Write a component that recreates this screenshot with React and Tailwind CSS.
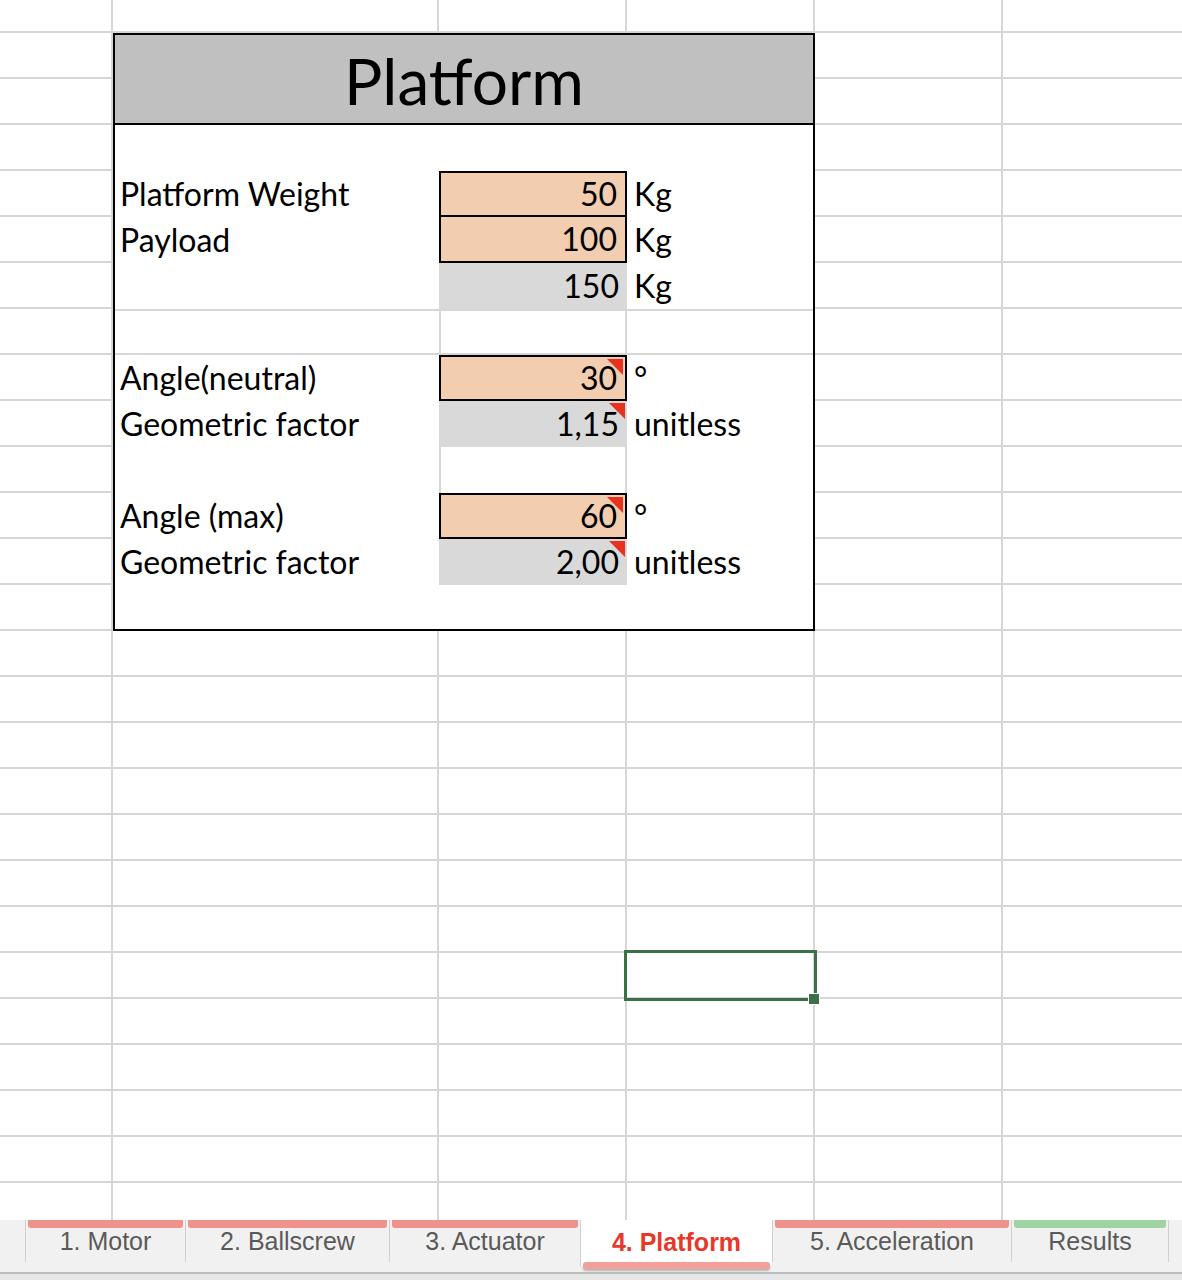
import React from "react";

/**
 * Spreadsheet view: "Platform" sheet with sheet tabs at the bottom
 */
const cellLine = "border-r-2 border-b-2 border-[#d6d6d6]";
const orange = "bg-[#f2cdb0]";
const grey = "bg-[#d9d9d9]";

const Flag = () => (
  <span className="absolute right-[2px] top-[2px] w-0 h-0 border-l-[16px] border-l-transparent border-t-[16px] border-t-[#e8321f]" />
);

const Label = ({ children }) => (
  <div className="flex items-center pl-[5px] leading-none whitespace-nowrap">{children}</div>
);

const Value = ({ children, bg = "", boxed = "", flag = false }) => (
  <div className={`relative flex items-center justify-end pr-[8px] leading-none ${bg} ${boxed}`}>
    {flag && <Flag />}
    {children}
  </div>
);

const Unit = ({ children }) => (
  <div className="flex items-center pl-[7px] leading-none whitespace-nowrap">{children}</div>
);

const Empty = ({ className = "" }) => <div className={className} />;

const PlatformBox = () => (
  <div className="col-start-2 col-span-3 row-start-2 row-span-13 z-10 border-2 border-black bg-white grid grid-cols-[324px_188px_186px] grid-rows-[90px_repeat(10,46px)_44px] text-[32px] text-black">
    <div className="col-span-3 bg-[#c0c0c0] border-b-2 border-black flex justify-center pt-[14px] text-[64px] leading-none">
      Platform
    </div>

    <Empty /><Empty /><Empty />

    <Label>Platform Weight</Label>
    <Value bg={orange} boxed="border-2 border-black">50</Value>
    <Unit>Kg</Unit>

    <Label>Payload</Label>
    <Value bg={orange} boxed="border-x-2 border-b-2 border-black">100</Value>
    <Unit>Kg</Unit>

    <Empty />
    <Value bg={grey}>150</Value>
    <Unit>Kg</Unit>

    <Empty className="border-y-2 border-[#d6d6d6]" />
    <Empty className="border-2 border-[#d6d6d6]" />
    <Empty className="border-y-2 border-[#d6d6d6]" />

    <Label>Angle(neutral)</Label>
    <Value bg={orange} boxed="border-2 border-black" flag>30</Value>
    <Unit>°</Unit>

    <Label>Geometric factor</Label>
    <Value bg={grey} flag>1,15</Value>
    <Unit>unitless</Unit>

    <Empty />
    <Empty className="border-x-2 border-[#d6d6d6]" />
    <Empty />

    <Label>Angle (max)</Label>
    <Value bg={orange} boxed="border-2 border-black" flag>60</Value>
    <Unit>°</Unit>

    <Label>Geometric factor</Label>
    <Value bg={grey} flag>2,00</Value>
    <Unit>unitless</Unit>

    <Empty /><Empty /><Empty />
  </div>
);

const SelectedCell = () => (
  <div className={`relative col-start-4 row-start-22 ${cellLine}`}>
    <div className="absolute -left-[3px] -top-[3px] z-20 w-[193px] h-[51px] border-[3px] border-[#3c7148]" />
    <div className="absolute left-[181px] top-[40px] z-30 w-[12px] h-[12px] bg-[#3c7148] border border-white" />
  </div>
);

const tabs = [
  { label: "1. Motor", width: "w-[160px]", bar: "bg-[#ef928b]" },
  { label: "2. Ballscrew", width: "w-[204px]", bar: "bg-[#ef928b]" },
  { label: "3. Actuator", width: "w-[191px]", bar: "bg-[#ef928b]" },
  { label: "4. Platform", width: "w-[192px]", active: true },
  { label: "5. Acceleration", width: "w-[239px]", bar: "bg-[#ef928b]" },
  { label: "Results", width: "w-[158px]", bar: "bg-[#9fd3a1]", last: true },
];

const SheetTabs = () => (
  <div className="h-[60px] shrink-0 bg-[#f1f1f1] flex flex-col font-['Liberation_Sans',Arial,sans-serif] text-[25px]">
    <div className="h-[52px] shrink-0 flex pl-[25px]">
      {tabs.map((t) =>
        t.active ? (
          <div key={t.label} className={`${t.width} h-[46px] bg-white border-l border-[#d0d0d0] flex flex-col`}>
            <div className="flex-1 flex items-center justify-center pt-[4px] font-bold text-[#e8372b]">{t.label}</div>
            <div className="h-[7px] shrink-0 mx-[2px] rounded-[3px] bg-[#f4a09a] shadow-[0_2px_2px_rgba(0,0,0,0.25)]" />
          </div>
        ) : (
          <div
            key={t.label}
            className={`${t.width} h-[42px] border-l border-[#d0d0d0] ${t.last ? "border-r" : ""} flex flex-col`}
          >
            <div className={`h-[8px] shrink-0 mx-[2px] rounded-b-[3px] ${t.bar}`} />
            <div className="text-center leading-none pt-[1px] text-[#5a5a5a]">{t.label}</div>
          </div>
        )
      )}
    </div>
    <div className="h-[2px] shrink-0 bg-[#bdbdbd]" />
    <div className="flex-1 bg-[#e6e6e6]" />
  </div>
);

export default function App() {
  const fillers = Array.from({ length: 122 });

  return (
    <div className="w-[1182px] h-[1280px] overflow-hidden bg-white flex flex-col font-['Lato','Noto_Sans',sans-serif]">
      <div className="h-[1220px] shrink-0 overflow-hidden">
        <div className="grid grid-cols-[113px_326px_188px_188px_188px_188px] grid-rows-[33px_repeat(26,46px)]">
          <PlatformBox />
          <SelectedCell />
          {fillers.map((_, i) => (
            <div key={i} className={cellLine} />
          ))}
        </div>
      </div>
      <SheetTabs />
    </div>
  );
}
